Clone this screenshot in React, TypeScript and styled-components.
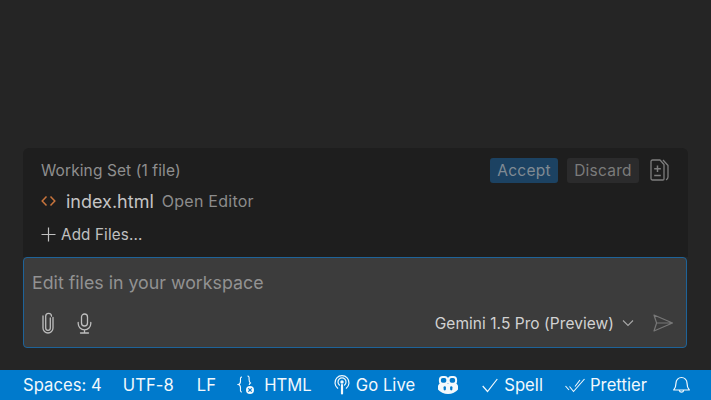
import React from "react";
import styled, { createGlobalStyle } from "styled-components";

const Global = createGlobalStyle`
  html, body { margin: 0; padding: 0; background: #252525; }
  #root { width: 711px; height: 400px; overflow: hidden; }
`;
const Page = styled.div`
  width: 711px; height: 400px; display: flex; flex-direction: column;
  background: #252525; font-family: Inter, "Noto Sans", sans-serif;
`;
const Workspace = styled.main`
  flex: 1; display: flex; flex-direction: column; justify-content: flex-end;
  padding: 0 23px 22px 23px;
`;
const WorkingSet = styled.section`
  background: #1e1e1e; border-radius: 6px 6px 0 0; height: 109px; box-sizing: border-box;
  padding: 9px 19px 0 18px; display: flex; flex-direction: column;
`;
const SetHeader = styled.div`
  display: flex; align-items: center; height: 26px;
`;
const SetTitle = styled.span`
  flex: 1; font-size: 15.5px; color: #8f8f8f; letter-spacing: 0.1px;
`;
const ActionButton = styled.span<{ $primary?: boolean }>`
  height: 25px; display: flex; align-items: center; justify-content: center; box-sizing: border-box;
  width: ${(p) => (p.$primary ? "68px" : "72px")};
  margin-right: ${(p) => (p.$primary ? "9px" : "11px")};
  border-radius: 3px; font-size: 15.5px; letter-spacing: 0.25px;
  background: ${(p) => (p.$primary ? "#1c4262" : "#2b2b2c")};
  color: ${(p) => (p.$primary ? "#808b94" : "#7b7b7b")};
`;
const FileRow = styled.div`
  display: flex; align-items: center; height: 26px; margin-top: 5px;
`;
const FileName = styled.span`
  font-size: 18px; color: #c4c4c4; margin-left: 10px;
`;
const FileHint = styled.span`
  font-size: 16px; color: #8c8c8c; margin-left: 8px; letter-spacing: 0.25px;
`;
const AddRow = styled.div`
  display: flex; align-items: center; height: 24px; margin-top: 8px; gap: 5px;
  font-size: 15.2px; color: #c0c0c0; letter-spacing: 0.15px;
`;
const InputBox = styled.section`
  background: #3c3c3c; border: 1px solid #1e6399; border-radius: 4px; height: 91px; box-sizing: border-box;
  margin-right: 1px; padding: 13px 8px 0 8px; display: flex; flex-direction: column;
`;
const Placeholder = styled.div`
  font-size: 17.8px; color: #929292; line-height: 24px;
`;
const InputFooter = styled.div`
  display: flex; align-items: center; margin-top: 14px; height: 28px;
`;
const AttachWrap = styled.span`
  display: flex; margin-left: 10px;
`;
const MicWrap = styled.span`
  display: flex; margin-left: 23px; flex: 1;
`;
const ModelName = styled.span`
  font-size: 15.5px; color: #d2d2d2; letter-spacing: 0.05px;
`;
const ChevronWrap = styled.span`
  display: flex; margin-left: 8px; margin-right: 19px;
`;
const SendWrap = styled.span`
  display: flex; margin-right: 5px;
`;
const StatusBar = styled.footer`
  height: 30px; flex: none; background: #007acc; color: #f2f8fc; display: flex; align-items: center;
  padding-left: 23px; font-size: 16.6px; letter-spacing: 0.05px;
`;
const StatusItem = styled.span<{ $gap: number; $iconGap?: number }>`
  display: flex; align-items: center; gap: ${(p) => p.$iconGap ?? 6}px; margin-right: ${(p) => p.$gap}px; white-space: nowrap;
`;

const CodeIcon = () => (
  <svg width="15" height="12" viewBox="0 0 15 12" fill="none" stroke="#c8743c" strokeWidth="1.5">
    <path d="M5.500 1.500 1.200 6l4.300 4.500M9.500 1.500 13.800 6l-4.300 4.500" />
  </svg>
);
const PlusIcon = () => (
  <svg width="15" height="15" viewBox="0 0 15 15" stroke="#c0c0c0" strokeWidth="1.2">
    <path d="M7.500 0.500v14M0.500 7.500h14" />
  </svg>
);
const DiffIcon = () => (
  <svg width="19" height="22" viewBox="0 0 19 22" fill="none" stroke="#7d7d7d" strokeWidth="1.3" strokeLinejoin="round">
    <path d="M2.500 1h7.500l4 4.500V20a1 1 0 0 1-1 1H2.500a1.500 1.500 0 0 1-1.500-1.500v-17A1.500 1.500 0 0 1 2.500 1z" />
    <path d="M13 1l5 5.500V18a3 3 0 0 1-2 2.800" />
    <path d="M7.500 6.500v6.500M4.200 9.800h6.600M4.200 16.500h6.600" strokeWidth="1.500" />
  </svg>
);
const ClipIcon = () => (
  <svg width="12" height="22" viewBox="0 0 12 22" fill="none" stroke="#bdbdbd" strokeWidth="1.300" strokeLinecap="round">
    <path d="M8.300 6v10a2.300 2.300 0 0 1-4.600 0V4.200a2.900 2.900 0 0 1 5.800 0" />
    <path d="M11 5.500v10.500a5 5 0 0 1-10 0V4" />
  </svg>
);
const MicIcon = () => (
  <svg width="15" height="21" viewBox="0 0 15 21" fill="none" stroke="#bdbdbd" strokeWidth="1.300" strokeLinecap="round">
    <rect x="4.500" y="1" width="6" height="12" rx="3" />
    <path d="M1.200 9.500v1a6.300 6.300 0 0 0 12.600 0v-1M7.500 17v3M3.500 20h8" />
  </svg>
);
const ChevronIcon = () => (
  <svg width="12" height="8" viewBox="0 0 12 8" fill="none" stroke="#a8a8a8" strokeWidth="1.100">
    <path d="M1 1.500 6 6.500l5-5" />
  </svg>
);
const SendIcon = () => (
  <svg width="20" height="18" viewBox="0 0 20 18" fill="none" stroke="#777777" strokeWidth="1.200" strokeLinejoin="round">
    <path d="M1 1 19.500 9 1 17l2.600-8zM3.600 9h16" />
  </svg>
);
const BracesIcon = () => (
  <svg width="19" height="20" viewBox="0 0 19 20" fill="none" stroke="#f2f8fc" strokeWidth="1.100">
    <path d="M5 2C3 2 3.500 4 3.500 6S3.300 9 1.500 9.500C3.300 10 3.500 11 3.500 13s-.5 4 1.500 4" />
    <path d="M10.500 1c1.800 0 1.600 1.500 1.600 3.500 0 1.600.3 2.800 1.300 3.500-.8.500-1.100 1-1.200 2" />
    <circle cx="13" cy="15" r="4" fill="#f2f8fc" stroke="none" />
    <path d="m11.300 13.300 3.400 3.400m0-3.400-3.400 3.400" stroke="#007acc" strokeWidth="1.200" />
  </svg>
);
const BroadcastIcon = () => (
  <svg width="16" height="20" viewBox="0 0 16 20" fill="none" stroke="#f2f8fc" strokeWidth="1.200" strokeLinecap="round">
    <path d="M3.700 13.200a7 7 0 1 1 8.600 0" />
    <path d="M5.400 10a4 4 0 1 1 5.200 0" />
    <circle cx="8" cy="7" r="1.700" fill="#f2f8fc" stroke="none" />
    <path d="M8 10v8.500" strokeWidth="2.200" />
  </svg>
);
const CopilotIcon = () => (
  <svg width="20" height="18" viewBox="0 0 20 18">
    <rect x="1.900" y="1" width="7.400" height="6.800" rx="2.800" fill="none" stroke="#f2f8fc" strokeWidth="2" />
    <rect x="10.700" y="1" width="7.400" height="6.800" rx="2.800" fill="none" stroke="#f2f8fc" strokeWidth="2" />
    <path d="M1.500 7.500h17l1.500 2v4c-2 2.500-6 4.500-10 4.500s-8-2-10-4.500v-4z" fill="#f2f8fc" />
    <rect x="5.600" y="10.200" width="2.300" height="4.300" rx="1.150" fill="#007acc" />
    <rect x="12.100" y="10.200" width="2.300" height="4.300" rx="1.150" fill="#007acc" />
  </svg>
);
const CheckIcon = () => (
  <svg width="16" height="15" viewBox="0 0 16 15" fill="none" stroke="#f2f8fc" strokeWidth="1.200">
    <path d="M0.700 8 5.500 13.500 15.300 1" />
  </svg>
);
const DoubleCheckIcon = () => (
  <svg width="20" height="15" viewBox="0 0 20 15" fill="none" stroke="#f2f8fc" strokeWidth="1.100">
    <path d="M0.500 8l3.500 4M4.500 8.500l4 5L19.500 1M10 8.500 15 2" />
  </svg>
);
const BellIcon = () => (
  <svg width="17" height="20" viewBox="0 0 17 20" fill="none" stroke="#f2f8fc" strokeWidth="1.200" strokeLinejoin="round">
    <path d="M3 8a5.500 5.500 0 0 1 11 0c0 3.500.5 5 2.300 7H0.700C2.500 13 3 11.500 3 8zM6.300 15.500a2.300 2.300 0 0 0 4.400 0" />
  </svg>
);

export default function App() {
  return (
    <Page>
      <Global />
      <Workspace>
        <WorkingSet>
          <SetHeader>
            <SetTitle>Working Set (1 file)</SetTitle>
            <ActionButton $primary>Accept</ActionButton>
            <ActionButton>Discard</ActionButton>
            <DiffIcon />
          </SetHeader>
          <FileRow>
            <CodeIcon />
            <FileName>index.html</FileName>
            <FileHint>Open Editor</FileHint>
          </FileRow>
          <AddRow>
            <PlusIcon />
            Add Files...
          </AddRow>
        </WorkingSet>
        <InputBox>
          <Placeholder>Edit files in your workspace</Placeholder>
          <InputFooter>
            <AttachWrap><ClipIcon /></AttachWrap>
            <MicWrap><MicIcon /></MicWrap>
            <ModelName>Gemini 1.5 Pro (Preview)</ModelName>
            <ChevronWrap><ChevronIcon /></ChevronWrap>
            <SendWrap><SendIcon /></SendWrap>
          </InputFooter>
        </InputBox>
      </Workspace>
      <StatusBar>
        <StatusItem $gap={21}>Spaces: 4</StatusItem>
        <StatusItem $gap={23}>UTF-8</StatusItem>
        <StatusItem $gap={21}>LF</StatusItem>
        <StatusItem $gap={22} $iconGap={8}><BracesIcon />HTML</StatusItem>
        <StatusItem $gap={23} $iconGap={6}><BroadcastIcon />Go Live</StatusItem>
        <StatusItem $gap={24}><CopilotIcon /></StatusItem>
        <StatusItem $gap={22} $iconGap={6}><CheckIcon />Spell</StatusItem>
        <StatusItem $gap={26} $iconGap={5}><DoubleCheckIcon />Prettier</StatusItem>
        <StatusItem $gap={0}><BellIcon /></StatusItem>
      </StatusBar>
    </Page>
  );
}
